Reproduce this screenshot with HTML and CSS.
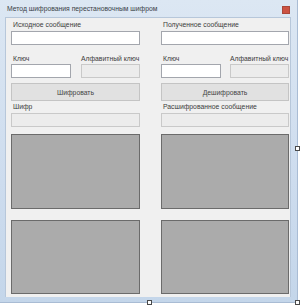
FILE: index.html
```html
<!DOCTYPE html>
<html>
<head>
<meta charset="utf-8">
<link rel="stylesheet" href="styles.css">
</head>
<body>
<div class="stage">
  <div class="window">
    <div class="titlebar">
      <span class="title">Метод шифрования перестановочным шифром</span>
      <span class="close"></span>
    </div>
    <div class="client">
      <div class="col">
        <div class="label">Исходное сообщение</div>
        <div class="box"></div>
        <div class="keyrow">
          <div class="keycell short">
            <div class="label">Ключ</div>
            <div class="box"></div>
          </div>
          <div class="keycell">
            <div class="label">Алфавитный ключ</div>
            <div class="box disabled"></div>
          </div>
        </div>
        <div class="button">Шифровать</div>
        <div class="label">Шифр</div>
        <div class="box disabled"></div>
        <div class="panel first"></div>
        <div class="panel second"></div>
      </div>
      <div class="col">
        <div class="label">Полученное сообщение</div>
        <div class="box"></div>
        <div class="keyrow">
          <div class="keycell short">
            <div class="label">Ключ</div>
            <div class="box"></div>
          </div>
          <div class="keycell">
            <div class="label">Алфавитный ключ</div>
            <div class="box disabled"></div>
          </div>
        </div>
        <div class="button">Дешифровать</div>
        <div class="label">Расшифрованное сообщение</div>
        <div class="box disabled"></div>
        <div class="panel first"></div>
        <div class="panel second"></div>
      </div>
    </div>
    <span class="handle h-right"></span>
    <span class="handle h-bottom"></span>
    <span class="handle h-corner"></span>
  </div>
</div>
</body>
</html>
```

FILE: styles.css
```css
html, body {
  margin: 0;
  padding: 0;
  background: #ffffff;
}
body {
  font-family: "Liberation Sans", Arial, sans-serif;
  font-size: 6.8px;
  color: #3c3c3c;
}
.stage {
  width: 300px;
  height: 306px;
  overflow: hidden;
}
.window {
  position: relative;
  width: 298px;
  height: 303px;
  box-sizing: border-box;
  padding: 0 6px 5px 5px;
  background: linear-gradient(to bottom, #dce7f3 0%, #cddcee 60%, #c4d6ea 100%);
  border: 1px solid #a9bcd4;
  border-top: none;
  border-left: none;
  display: flex;
  flex-direction: column;
}
.titlebar {
  height: 17px;
  flex: none;
  display: flex;
  align-items: center;
  justify-content: space-between;
  padding: 0 1px 0 2px;
}
.title {
  font-size: 6.8px;
  color: #3a3f47;
}
.close {
  width: 6px;
  height: 6px;
  background: #cc5242;
  border: 1px solid #a9473a;
  margin-top: 2px;
}
.client {
  flex: 1;
  background: #f0f0f0;
  border: 1px solid #b7c7da;
  border-bottom: none;
  box-sizing: border-box;
  display: grid;
  grid-template-columns: 129px 128px;
  column-gap: 21px;
  padding: 2px 0 0 5px;
}
.col {
  display: flex;
  flex-direction: column;
}
.label {
  height: 10px;
  line-height: 10px;
  padding-left: 2px;
  white-space: nowrap;
}
.box {
  height: 14px;
  box-sizing: border-box;
  background: #ffffff;
  border: 1px solid #a3a6ad;
  margin-top: 1px;
}
.box.disabled {
  background: #ececec;
  border-color: #c9c9c9;
}
.keyrow {
  display: flex;
  justify-content: space-between;
  margin-top: 9px;
}
.keycell {
  width: 59px;
  display: flex;
  flex-direction: column;
}
.keycell .label {
  padding-left: 0;
}
.keycell.short {
  width: 60px;
}
.keycell.short .label {
  padding-left: 2px;
}
.keycell .box {
  margin-top: 0;
}
.button {
  margin-top: 5px;
  height: 18px;
  box-sizing: border-box;
  background: #e1e1e1;
  border: 1px solid #c4c4c4;
  display: flex;
  align-items: center;
  justify-content: center;
  color: #444444;
}
.col > .button + .label {
  margin-top: 1px;
}
.panel {
  box-sizing: border-box;
  background: #ababab;
  border: 1px solid #6b6b6b;
}
.panel.first {
  margin-top: 7px;
  height: 75px;
}
.panel.second {
  margin-top: 11px;
  height: 74px;
}
.handle {
  position: absolute;
  width: 3px;
  height: 3px;
  background: #ffffff;
  border: 1px solid #4a4a4a;
}
.h-right {
  right: -3px;
  top: 146px;
}
.h-bottom {
  left: 147px;
  bottom: -3px;
}
.h-corner {
  right: -3px;
  bottom: -3px;
}
```
